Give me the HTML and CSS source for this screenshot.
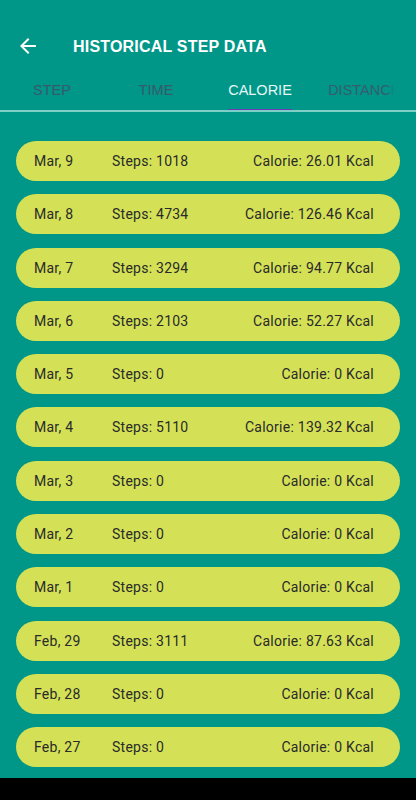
FILE: index.html
```html
<!DOCTYPE html>
<html lang="en">
<head>
  <meta charset="UTF-8">
  <meta name="viewport" content="width=device-width, initial-scale=1">
  <title>Historical Step Data</title>
  <link rel="stylesheet" href="styles.css">
</head>

<body>
  <div class="screen">
    <div class="toolbar">
      <svg class="back" viewBox="0 0 24 24" width="24" height="24">
        <path d="M20 11H7.83l5.59-5.59L12 4l-8 8 8 8 1.41-1.41L7.83 13H20v-2z" fill="#fff"/>
      </svg>
      <h1>HISTORICAL STEP DATA</h1>
    </div>

    <div class="tabs">
      <div class="tab"><span>STEP</span></div>
      <div class="tab"><span>TIME</span></div>
      <div class="tab active"><span>CALORIE</span></div>
      <div class="tab faded"><span>DISTANCE</span></div>
    </div>

    <div class="list">
      <div class="row"><span class="date">Mar, 9</span><span class="steps">Steps: 1018</span><span class="cal">Calorie: 26.01 Kcal</span></div>
      <div class="row"><span class="date">Mar, 8</span><span class="steps">Steps: 4734</span><span class="cal">Calorie: 126.46 Kcal</span></div>
      <div class="row"><span class="date">Mar, 7</span><span class="steps">Steps: 3294</span><span class="cal">Calorie: 94.77 Kcal</span></div>
      <div class="row"><span class="date">Mar, 6</span><span class="steps">Steps: 2103</span><span class="cal">Calorie: 52.27 Kcal</span></div>
      <div class="row"><span class="date">Mar, 5</span><span class="steps">Steps: 0</span><span class="cal">Calorie: 0 Kcal</span></div>
      <div class="row"><span class="date">Mar, 4</span><span class="steps">Steps: 5110</span><span class="cal">Calorie: 139.32 Kcal</span></div>
      <div class="row"><span class="date">Mar, 3</span><span class="steps">Steps: 0</span><span class="cal">Calorie: 0 Kcal</span></div>
      <div class="row"><span class="date">Mar, 2</span><span class="steps">Steps: 0</span><span class="cal">Calorie: 0 Kcal</span></div>
      <div class="row"><span class="date">Mar, 1</span><span class="steps">Steps: 0</span><span class="cal">Calorie: 0 Kcal</span></div>
      <div class="row"><span class="date">Feb, 29</span><span class="steps">Steps: 3111</span><span class="cal">Calorie: 87.63 Kcal</span></div>
      <div class="row"><span class="date">Feb, 28</span><span class="steps">Steps: 0</span><span class="cal">Calorie: 0 Kcal</span></div>
      <div class="row"><span class="date">Feb, 27</span><span class="steps">Steps: 0</span><span class="cal">Calorie: 0 Kcal</span></div>
    </div>

    <div class="navbar"></div>
  </div>
</body>
</html>
```

FILE: styles.css
```css
body {
  margin: 0;
  font-family: Roboto, 'Noto Sans', sans-serif;
  background: #009688;
}
.screen {
  height: 800px;
  display: flex;
  flex-direction: column;
  overflow: hidden;
}
.toolbar {
  height: 48px;
  padding-top: 22px;
  display: flex;
  align-items: center;
}
.back {
  margin-left: 16px;
  flex-shrink: 0;
}
h1 {
  margin: 1px 0 0 33px;
  color: #fff;
  font-family: 'Liberation Sans', Arial, sans-serif;
  font-size: 16px;
  font-weight: 700;
  letter-spacing: 0.2px;
}
.tabs {
  display: flex;
  height: 40px;
  border-bottom: 2px solid #7fcfc6;
  white-space: nowrap;
  overflow: hidden;
}
.tab {
  width: 104px;
  flex-shrink: 0;
  display: flex;
  justify-content: center;
  align-items: stretch;
  font-family: 'Liberation Sans', Arial, sans-serif;
  font-size: 14.5px;
  color: #385a6c;
}
.tab span {
  display: flex;
  align-items: center;
  padding-top: 1px;
  border-bottom: 3px solid transparent;
  margin-bottom: -2px;
}
.tab.active {
  color: #e6f7f5;
}
.tab.active span {
  border-bottom-color: #673ab7;
}
.tab.faded span {
  -webkit-mask-image: linear-gradient(to right, #000 82%, transparent 93%);
  mask-image: linear-gradient(to right, #000 82%, transparent 93%);
}
.list {
  flex: 1;
  padding: 29px 16px 0;
  display: flex;
  flex-direction: column;
  gap: 13.3px;
}
.row {
  height: 40px;
  flex-shrink: 0;
  background: #d4e157;
  border-radius: 20px;
  display: flex;
  align-items: center;
  padding: 0 26px 0 18px;
  font-size: 14px;
  letter-spacing: 0.25px;
  color: #2a2a2a;
}
.date {
  width: 78px;
}
.cal {
  margin-left: auto;
}
.navbar {
  height: 22px;
  background: #000;
  flex-shrink: 0;
}
```
